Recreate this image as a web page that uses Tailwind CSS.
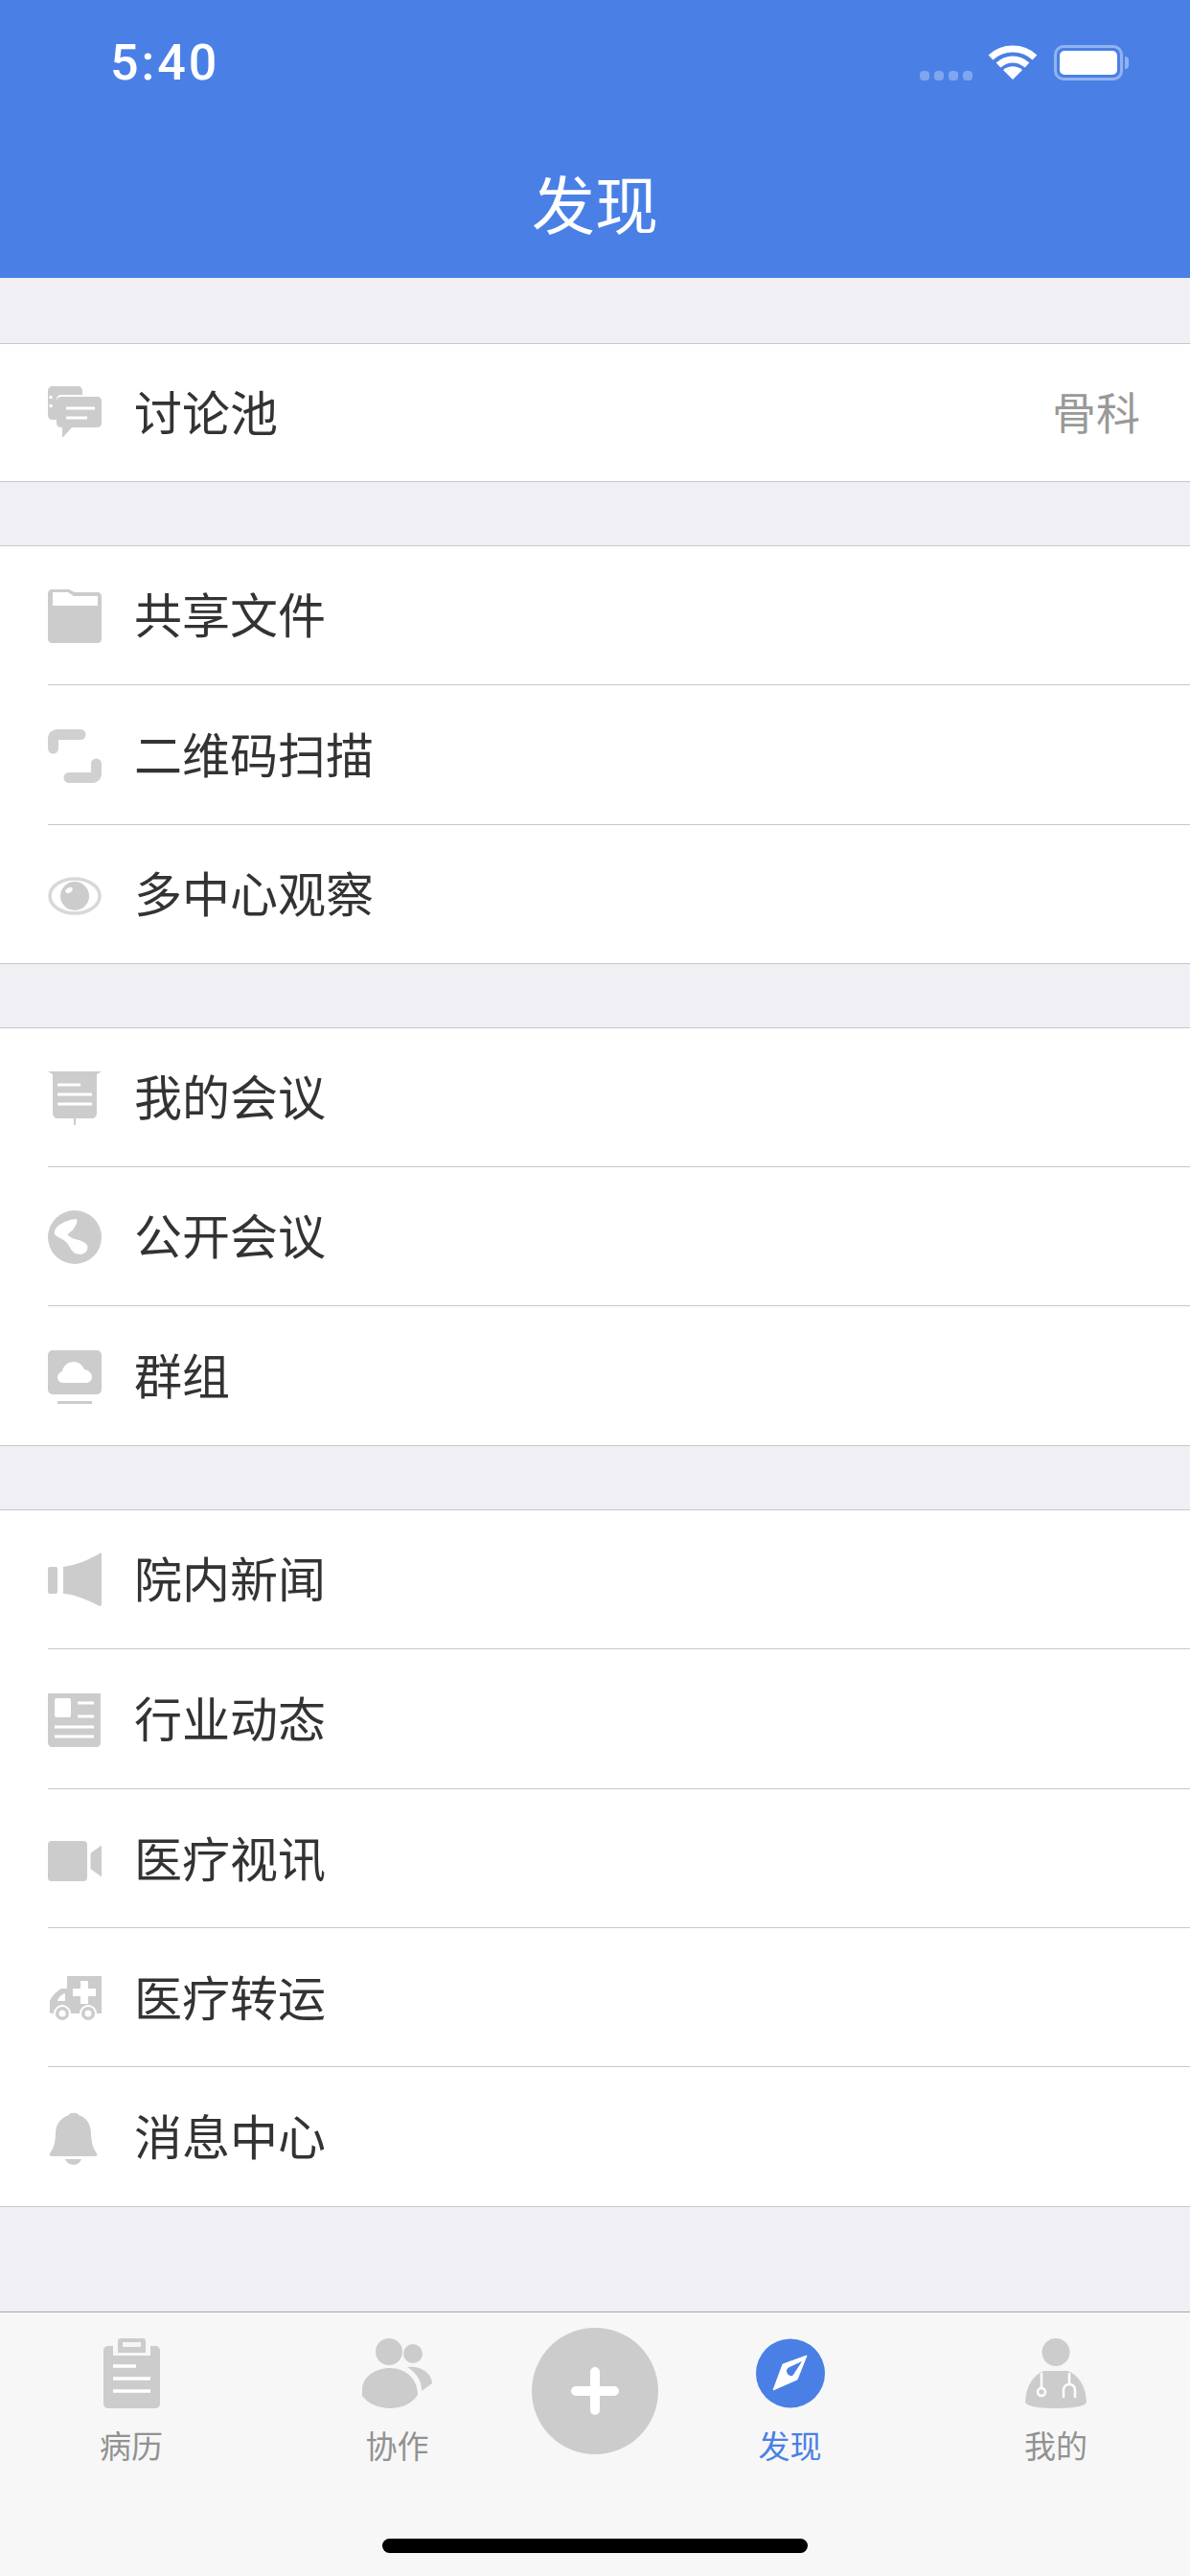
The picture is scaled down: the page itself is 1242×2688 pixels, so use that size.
<!DOCTYPE html>
<html lang="zh">
<head>
  <meta charset="utf-8">
  <title>发现</title>
  <script src="https://cdn.jsdelivr.net/npm/@tailwindcss/browser@4"></script>
</head>
<body class="bg-[#efeff4] font-['Noto_Sans_CJK_SC','Noto_Sans',sans-serif]">
<div class="flex flex-col w-[1242px] h-[2688px] overflow-hidden">

  <!-- header -->
  <header class="h-[290px] shrink-0 bg-[#4a80e6] text-white">
    <div class="flex items-start h-[146px] pl-[115px] pr-[64px]">
      <span class="mt-[34px] text-[52px] leading-[64px] tracking-[3px] font-medium font-['Roboto',sans-serif]">5:40</span>
      <div class="flex items-end gap-[5px] ml-auto mt-[74px] h-[10px]">
        <span class="w-[10px] h-[10px] rounded-[4px] bg-white/30"></span>
        <span class="w-[10px] h-[10px] rounded-[4px] bg-white/30"></span>
        <span class="w-[10px] h-[10px] rounded-[4px] bg-white/30"></span>
        <span class="w-[10px] h-[10px] rounded-[4px] bg-white/30"></span>
      </div>
      <svg class="mt-[47px] ml-[16px]" width="52" height="37" viewBox="0 0 52 37" fill="none" stroke="#fff" stroke-width="7">
        <path d="M3 13C16 1 36 1 49 13"/>
        <path d="M11 21C20 13 32 13 41 21"/>
        <path d="M26 36L16 26C22 21 30 21 36 26Z" fill="#fff" stroke="none"/>
      </svg>
      <div class="flex items-center mt-[47px] ml-[17px]">
        <div class="w-[72px] h-[37px] rounded-[10px] border-[3px] border-white/40 p-[3px]">
          <div class="w-full h-full rounded-[5px] bg-white"></div>
        </div>
        <div class="w-[4px] h-[13px] ml-[2px] rounded-r-full bg-white/40"></div>
      </div>
    </div>
    <h1 class="text-center text-[66px] leading-[96px] font-normal mt-[16px]">发现</h1>
  </header>

  <main class="flex-1">
    <!-- 讨论池 -->
    <section class="mt-[68px] bg-white border-y border-[#c8c7cc]">
      <div class="flex items-center h-[143px] pl-[50px] pr-[52px]">
        <svg class="shrink-0" width="56" height="56" viewBox="0 0 56 56">
          <path d="M5 0H31C34 0 36 2 36 5V9H14C11 9 9 11 9 14V35H5C2 35 0 33 0 30V5C0 2 2 0 5 0Z" fill="#ccc"/>
          <path d="M14 11H52C54 11 56 13 56 15V39C56 41 54 43 52 43H25L16 53C15 54 15 53 15 52V43H14C11 43 9 41 9 39V15C9 13 11 11 14 11Z" fill="#ccc"/>
          <path d="M19 23H49M19 33H41" stroke="#fff" stroke-width="3" fill="none"/>
          <path d="M3 10V13M3 19V22" stroke="#fff" stroke-width="3" fill="none"/>
        </svg>
        <span class="ml-[34px] pb-[5px] text-[50px] text-[#333]">讨论池</span>
        <span class="ml-auto pb-[5px] text-[46px] text-[#999]">骨科</span>
      </div>
    </section>

    <!-- 文件 -->
    <section class="mt-[66px] bg-white border-y border-[#c8c7cc]">
      <div class="ml-[50px] flex items-center h-[145px] border-b border-[#c8c7cc]">
        <svg class="mt-[2px] shrink-0" width="56" height="56" viewBox="0 0 56 56">
          <path d="M4 0H22L28 3H52C54 3 56 5 56 7V52C56 54 54 56 52 56H4C2 56 0 54 0 52V4C0 2 2 0 4 0Z" fill="#ccc"/>
          <path d="M5 3H21L27 7H52V17H5Z" fill="#fff"/>
        </svg>
        <span class="ml-[34px] pb-[5px] text-[50px] text-[#333]">共享文件</span>
      </div>
      <div class="ml-[50px] flex items-center h-[146px] border-b border-[#c8c7cc]">
        <svg class="mt-[2px] shrink-0" width="56" height="56" viewBox="0 0 56 56" fill="none" stroke="#d0d0d0" stroke-width="11" stroke-linecap="round" stroke-linejoin="round">
          <path d="M5.500 20V10C5.500 7 7.500 5.500 10 5.500H34"/>
          <path d="M50.500 36V46C50.500 49 48.500 50.500 46 50.500H22"/>
        </svg>
        <span class="ml-[34px] pb-[5px] text-[50px] text-[#333]">二维码扫描</span>
      </div>
      <div class="ml-[50px] flex items-center h-[144px]">
        <svg class="mt-[3px] shrink-0" width="56" height="56" viewBox="0 0 56 56">
          <ellipse cx="28" cy="28" rx="26" ry="18" fill="none" stroke="#d8d8d8" stroke-width="3.500"/>
          <circle cx="28" cy="28" r="15" fill="#ccc"/>
          <ellipse cx="22" cy="22" rx="4" ry="2.500" fill="#fff" transform="rotate(-30 22 22)"/>
        </svg>
        <span class="ml-[34px] pb-[5px] text-[50px] text-[#333]">多中心观察</span>
      </div>
    </section>

    <!-- 会议 -->
    <section class="mt-[66px] bg-white border-y border-[#c8c7cc]">
      <div class="ml-[50px] flex items-center h-[145px] border-b border-[#c8c7cc]">
        <svg class="mt-[2px] shrink-0" width="56" height="56" viewBox="0 0 56 56">
          <path d="M0 0H56L51 3V43C51 47 49 49 45 49H11C7 49 5 47 5 43V3Z" fill="#ccc"/>
          <path d="M27 49H29V56H27Z" fill="#ccc"/>
          <path d="M10 14H34M10 24H46M10 34H46" stroke="#fff" stroke-width="3" fill="none"/>
        </svg>
        <span class="ml-[34px] pb-[5px] text-[50px] text-[#333]">我的会议</span>
      </div>
      <div class="ml-[50px] flex items-center h-[145px] border-b border-[#c8c7cc]">
        <svg class="mt-[2px] shrink-0" width="56" height="56" viewBox="0 0 56 56">
          <circle cx="28" cy="28" r="28" fill="#ccc"/>
          <path d="M30 9C24 9 17 12 12 15C8 18 6 22 7 25C9 28 15 29 19 33C23 37 24 43 29 45C34 47 40 45 41 41C43 36 39 34 35 32C30 30 25 30 21 26C20 23 27 22 28 17C30 14 31 12 30 9Z" fill="#fff"/>
        </svg>
        <span class="ml-[34px] pb-[5px] text-[50px] text-[#333]">公开会议</span>
      </div>
      <div class="ml-[50px] flex items-center h-[145px]">
        <svg class="mt-[2px] shrink-0" width="56" height="56" viewBox="0 0 56 56">
          <rect width="56" height="46" rx="5" fill="#ccc"/>
          <path d="M10 53H46V56H10Z" fill="#ccc"/>
          <path d="M16 34C12 34 10 31 10 28C10 25 12 23 15 22C16 16 21 12 27 12C32 12 36 15 38 20C43 21 46 24 46 28C46 31 43 34 40 34Z" fill="#fff"/>
        </svg>
        <span class="ml-[34px] pb-[5px] text-[50px] text-[#333]">群组</span>
      </div>
    </section>

    <!-- 新闻 -->
    <section class="mt-[66px] bg-white border-y border-[#c8c7cc]">
      <div class="ml-[50px] flex items-center h-[145px] border-b border-[#c8c7cc]">
        <svg class="shrink-0" width="56" height="56" viewBox="0 0 56 56">
          <rect y="15" width="10" height="28" rx="2" fill="#ccc"/>
          <path d="M16 15C30 13 42 8 54 1C55 0 56 1 56 2V54C56 55 55 56 54 56C42 50 30 44 16 43Z" fill="#ccc"/>
        </svg>
        <span class="ml-[34px] pb-[5px] text-[50px] text-[#333]">院内新闻</span>
      </div>
      <div class="ml-[50px] flex items-center h-[146px] border-b border-[#c8c7cc]">
        <svg class="mt-[2px] shrink-0" width="56" height="56" viewBox="0 0 56 56">
          <path d="M0 0H55V51C55 54 53 56 51 56H4C2 56 0 54 0 51Z" fill="#ccc"/>
          <rect x="7" y="5" width="17" height="20" rx="2" fill="#fff"/>
          <path d="M31 10H48M31 24H48M7 35H48M7 45H48" stroke="#fff" stroke-width="3" fill="none"/>
        </svg>
        <span class="ml-[34px] pb-[5px] text-[50px] text-[#333]">行业动态</span>
      </div>
      <div class="ml-[50px] flex items-center h-[145px] border-b border-[#c8c7cc]">
        <svg class="mt-[6px] shrink-0" width="56" height="56" viewBox="0 0 56 56">
          <rect y="7" width="41" height="42" rx="4" fill="#ccc"/>
          <path d="M45 20L56 12V44L45 36Z" fill="#ccc" stroke="#ccc" stroke-width="1" stroke-linejoin="round"/>
        </svg>
        <span class="ml-[34px] pb-[4px] text-[50px] text-[#333]">医疗视讯</span>
      </div>
      <div class="ml-[50px] flex items-center h-[145px] border-b border-[#c8c7cc]">
        <svg class="mt-[4px] shrink-0" width="56" height="56" viewBox="0 0 56 56">
          <path d="M20 4H56V43H4C2 43 1 41 2 39V30C3 26 10 19 14 17H20Z" fill="#ccc"/>
          <path d="M10 30C11 26 14 23 18 22V30Z" fill="#fff"/>
          <path d="M34 9H42V17H50V25H42V33H34V25H26V17H34Z" fill="#fff"/>
          <circle cx="15" cy="43" r="8" fill="#ccc" stroke="#fff" stroke-width="2"/>
          <circle cx="15" cy="43" r="3.500" fill="#fff"/>
          <circle cx="42" cy="43" r="8" fill="#ccc" stroke="#fff" stroke-width="2"/>
          <circle cx="42" cy="43" r="3.500" fill="#fff"/>
        </svg>
        <span class="ml-[34px] pb-[4px] text-[50px] text-[#333]">医疗转运</span>
      </div>
      <div class="ml-[50px] flex items-center h-[145px]">
        <svg class="mt-[2px] shrink-0" width="56" height="56" viewBox="0 0 56 56">
          <path d="M23 4C23 1 33 1 33 4C42 7 45 13 46 22C46 32 48 39 52 44C53 46 52 47 50 47H5C3 47 2 46 3 44C7 39 9 32 9 22C10 13 14 7 23 4Z" fill="#ccc" transform="translate(-1 0)"/>
          <path d="M18 50H35C34 53 31 56 27 56C23 56 19 53 18 50Z" fill="#ccc"/>
        </svg>
        <span class="ml-[34px] pb-[4px] text-[50px] text-[#333]">消息中心</span>
      </div>
    </section>
  </main>

  <!-- tab bar -->
  <nav class="shrink-0 bg-[#f7f7f7] border-t border-[#a7a7aa] h-[276px]">
    <div class="grid grid-cols-[274px_281px_132px_275px_280px] h-[236px] text-[33px] leading-[40px] text-[#929292]">
      <div class="flex flex-col items-center pt-[27px]">
        <svg width="59" height="73" viewBox="0 0 59 73">
          <path d="M5 8H10V18H49V8H54C57 8 59 10 59 13V68C59 71 57 73 54 73H5C2 73 0 71 0 68V13C0 10 2 8 5 8Z" fill="#ccc"/>
          <path d="M15 3C15 1 16 0 18 0H41C43 0 44 1 44 3V15H15Z" fill="#ccc"/>
          <path d="M20 4H39V9H20Z" fill="#fff" opacity=".8"/>
          <path d="M10 29H34M10 42H49M10 55H49" stroke="#fff" stroke-width="3.500" fill="none"/>
        </svg>
        <span class="mt-[18px]">病历</span>
      </div>
      <div class="flex flex-col items-center pt-[27px]">
        <svg width="73" height="73" viewBox="0 0 73 73">
          <ellipse cx="28" cy="14" rx="14" ry="14" fill="#ccc"/>
          <circle cx="53" cy="16" r="10" fill="#ccc"/>
          <path d="M47 30C60 28 73 36 73 47L62 55C62 44 57 36 47 30Z" fill="#ccc"/>
          <path d="M29 31C46 31 58 43 58 59C52 68 41 73 29 73C17 73 6 68 0 60V53C0 41 13 31 29 31Z" fill="#ccc" stroke="#f7f7f7" stroke-width="2" paint-order="stroke"/>
        </svg>
        <span class="mt-[18px]">协作</span>
      </div>
      <div class="pt-[16px]">
        <div class="flex items-center justify-center w-[132px] h-[132px] rounded-full bg-[#ccc]">
          <svg width="50" height="50" viewBox="0 0 50 50" fill="none" stroke="#fff" stroke-width="10" stroke-linecap="round">
            <path d="M5 25H45M25 5V45"/>
          </svg>
        </div>
      </div>
      <div class="flex flex-col items-center pt-[27px] text-[#4a80e6]">
        <svg width="72" height="73" viewBox="0 0 72 73">
          <circle cx="36" cy="36.500" r="36" fill="#4a80e6"/>
          <path d="M53 18L43 43L18 54L28 27Z" fill="#fff" stroke="#fff" stroke-width="1" stroke-linejoin="round"/>
          <path d="M48 24L39 38C37 41 32 38 32 34C32 32 33 31 35 30Z" fill="#4a80e6"/>
        </svg>
        <span class="mt-[18px]">发现</span>
      </div>
      <div class="flex flex-col items-center pt-[27px]">
        <svg width="64" height="73" viewBox="0 0 64 73">
          <circle cx="32" cy="14.500" r="14.500" fill="#ccc"/>
          <path d="M20 34H44C56 38 63 50 64 66C64 70 54 73 32 73C10 73 0 70 0 66C1 50 8 38 20 34Z" fill="#ccc"/>
          <path d="M17 36V52M46 36V47" stroke="#fff" stroke-width="2.500" fill="none"/>
          <circle cx="17" cy="56" r="4" fill="none" stroke="#fff" stroke-width="2.500"/>
          <path d="M40 62V54C40 46 52 46 52 54V62" fill="none" stroke="#fff" stroke-width="2.500"/>
        </svg>
        <span class="mt-[18px]">我的</span>
      </div>
    </div>
    <div class="w-[444px] h-[15px] mx-auto rounded-full bg-black"></div>
  </nav>
</div>
</body>
</html>
